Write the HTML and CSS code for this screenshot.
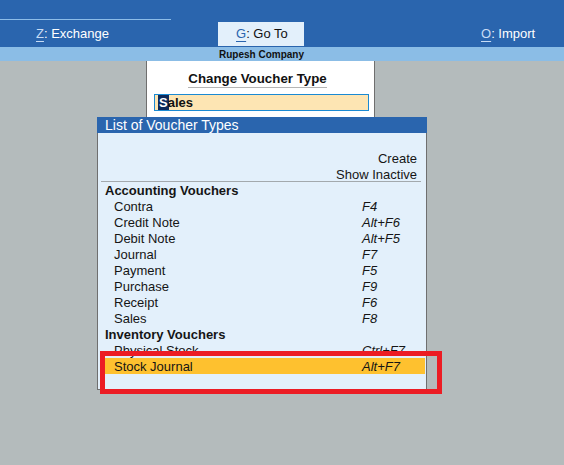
FILE: index.html
```html
<!DOCTYPE html>
<html lang="en">
<head>
    <meta charset="UTF-8">
    <title>Change Voucher Type</title>
    <link rel="stylesheet" href="styles.css">
</head>
<body>
    <div class="topbar">
        <div class="topline"></div>
        <div class="menu">
            <div class="menu-item first"><span class="key">Z</span>: Exchange</div>
            <div class="menu-item active"><span class="key">G</span>: Go To</div>
            <div class="menu-item last"><span class="key">O</span>: Import</div>
        </div>
    </div>
    <div class="company">Rupesh Company</div>

    <div class="screen">
        <div class="voucher-box">
            <div class="voucher-title"><span>Change Voucher Type</span></div>
            <div class="voucher-input"><span class="cursor">S</span>ales</div>
        </div>

        <div class="list">
            <div class="list-title">List of Voucher Types</div>
            <div class="list-body">
                <div class="blank"></div>
                <div class="action">Create</div>
                <div class="action sep">Show Inactive</div>

                <div class="group">Accounting Vouchers</div>
                <div class="row"><span>Contra</span><i>F4</i></div>
                <div class="row"><span>Credit Note</span><i>Alt+F6</i></div>
                <div class="row"><span>Debit Note</span><i>Alt+F5</i></div>
                <div class="row"><span>Journal</span><i>F7</i></div>
                <div class="row"><span>Payment</span><i>F5</i></div>
                <div class="row"><span>Purchase</span><i>F9</i></div>
                <div class="row"><span>Receipt</span><i>F6</i></div>
                <div class="row"><span>Sales</span><i>F8</i></div>
                <div class="group">Inventory Vouchers</div>
                <div class="row"><span>Physical Stock</span><i>Ctrl+F7</i></div>
                <div class="row selected"><span>Stock Journal</span><i>Alt+F7</i></div>
                <div class="blank end"></div>
            </div>
        </div>

        <!-- annotation box round the selected row -->
        <div class="mark"></div>
    </div>
</body>
</html>
```

FILE: styles.css
```css
body {
    margin: 0;
    font-family: "Liberation Sans", Arial, sans-serif;
    background-color: #b4bbbc;
    width: 564px;
    height: 465px;
    overflow: hidden;
}

.topbar {
    background-color: #2a65ae;
    height: 47px;
    padding-top: 19px;
    box-sizing: border-box;
}

.topline {
    width: 171px;
    height: 1px;
    background-color: #8dbde8;
}

.menu {
    display: grid;
    grid-template-columns: 218px 86px 1fr;
    margin-top: 2px;
    height: 22px;
    font-size: 13px;
    line-height: 24px;
    color: #ffffff;
}

.menu-item.first {
    padding-left: 36px;
}

.menu-item.active {
    background-color: #e3f0fb;
    color: #111111;
    padding-left: 18px;
}

.menu-item.last {
    padding-left: 177px;
}

.key {
    color: #c8dcf5;
    text-decoration: underline;
    text-underline-offset: 3px;
}

.active .key {
    color: #2a65ae;
}

.company {
    background-color: #8bbde6;
    height: 14px;
    line-height: 15px;
    font-size: 10px;
    font-weight: bold;
    color: #111111;
    text-align: center;
    padding-right: 41px;
}

.screen {
    position: relative;
}

.voucher-box {
    margin-left: 146px;
    width: 229px;
    height: 56px;
    background-color: #ffffff;
    border-left: 1px solid #6f6f6f;
    border-right: 1px solid #6f6f6f;
    padding-top: 9px;
    box-sizing: border-box;
}

.voucher-title {
    text-align: center;
    padding-right: 6px;
    font-size: 13.3px;
    font-weight: bold;
    line-height: 17px;
    color: #111111;
}

.voucher-title span {
    display: inline-block;
    border-bottom: 1px solid #b5b5b5;
}

.voucher-input {
    margin: 6px 0 0 7px;
    width: 215px;
    height: 17px;
    box-sizing: border-box;
    background-color: #fde5b3;
    border: 1px solid #1b8ad3;
    padding-left: 3px;
    font-size: 13px;
    font-weight: bold;
    line-height: 15px;
    color: #111111;
}

.cursor {
    display: inline-block;
    background-color: #0d2a5a;
    color: #ffffff;
    padding: 0 1px;
    margin-right: -1px;
}

.list {
    margin-left: 97px;
    width: 330px;
    box-sizing: border-box;
    border: 1px solid #6f6f6f;
    border-top: none;
    background-color: #e3f0fb;
}

.list-title {
    background-color: #2a65ae;
    color: #ffffff;
    font-size: 14px;
    height: 16px;
    line-height: 17px;
    padding-left: 8px;
    margin: 0 -1px;
}

.list-body {
    font-size: 13px;
    line-height: 17px;
    color: #151515;
    padding-top: 1px;
}

.list-body > div {
    height: 16px;
}

.blank.end {
    height: 15px;
}

.action {
    text-align: right;
    padding-right: 9px;
}

.action.sep {
    margin: 0 5px 0 3px;
    padding-right: 4px;
    border-bottom: 1px solid #a3a9ad;
    height: 15px;
}

.group {
    font-weight: bold;
    padding-left: 7px;
}

.row {
    display: grid;
    grid-template-columns: 248px 1fr;
    padding-left: 16px;
}

.row i {
    font-style: italic;
}

.row.selected {
    background-color: #fec12f;
    margin: 0 1px 0 3px;
    padding-left: 13px;
}

.mark {
    position: absolute;
    left: 100px;
    top: 290px;
    width: 342px;
    height: 43px;
    box-sizing: border-box;
    border: 5px solid #ec1c24;
}
```
